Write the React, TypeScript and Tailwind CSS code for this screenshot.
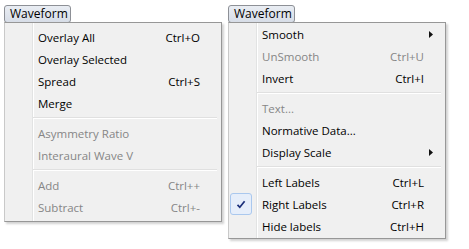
import { ReactNode } from "react";

type Item =
  | { kind: "sep" }
  | {
      kind?: "item";
      label: string;
      shortcut?: string;
      disabled?: boolean;
      submenu?: boolean;
      checked?: boolean;
    };

const leftItems: Item[] = [
  { label: "Overlay All", shortcut: "Ctrl+O" },
  { label: "Overlay Selected" },
  { label: "Spread", shortcut: "Ctrl+S" },
  { label: "Merge" },
  { kind: "sep" },
  { label: "Asymmetry Ratio", disabled: true },
  { label: "Interaural Wave V", disabled: true },
  { kind: "sep" },
  { label: "Add", shortcut: "Ctrl++", disabled: true },
  { label: "Subtract", shortcut: "Ctrl+-", disabled: true },
];

const rightItems: Item[] = [
  { label: "Smooth", submenu: true },
  { label: "UnSmooth", shortcut: "Ctrl+U", disabled: true },
  { label: "Invert", shortcut: "Ctrl+I" },
  { kind: "sep" },
  { label: "Text...", disabled: true },
  { label: "Normative Data..." },
  { label: "Display Scale", submenu: true },
  { kind: "sep" },
  { label: "Left Labels", shortcut: "Ctrl+L" },
  { label: "Right Labels", shortcut: "Ctrl+R", checked: true },
  { label: "Hide labels", shortcut: "Ctrl+H" },
];

const CheckBox = () => (
  <div className="ml-px -mt-[2px] flex h-[22px] w-[22px] items-center justify-center rounded-[3px] border border-[#aac8ee] bg-[#e6eefa]">
    <svg width="10" height="9" viewBox="0 0 10 9">
      <path d="M1.5 4.8 L3.8 7.3 L8.6 1.2" fill="none" stroke="#1b2f7a" strokeWidth="1.7" />
    </svg>
  </div>
);

const Arrow = () => (
  <svg width="4" height="7" viewBox="0 0 4 7" className="ml-[5px] -mt-[2px]">
    <path d="M0 0 L4 3.5 L0 7 Z" fill="#111" />
  </svg>
);

function MenuRow({ item }: { item: Item }) {
  if (item.kind === "sep") {
    return (
      <div className="flex h-[8px] flex-col justify-center pl-[28px] pr-[4px]">
        <div className="h-px bg-[#e0e0e0]" />
        <div className="h-px bg-white" />
      </div>
    );
  }
  const color = item.disabled ? "text-[#868686]" : "text-black";
  return (
    <div className={`flex h-[22px] items-center pt-[2px] ${color}`}>
      <div className="flex w-[33px] items-center">{item.checked && <CheckBox />}</div>
      <div className="flex-1 whitespace-nowrap">{item.label}</div>
      {item.shortcut && <div className="whitespace-nowrap">{item.shortcut}</div>}
      <div className="flex w-[21px] items-center">{item.submenu && <Arrow />}</div>
    </div>
  );
}

function Menu({ items, className }: { items: Item[]; className: string }): ReactNode {
  return (
    <div className="flex flex-col">
      <div className="flex h-[18px] w-[67px] items-center rounded-[3px] border border-[#8d9096] bg-[linear-gradient(#e9edf3,#d7dde7)] pl-[5px] text-[12px] leading-none text-black">
        Waveform
      </div>
      <div
        className={`-mt-px w-[218px] border border-[#979797] border-l-[#c9c9c9] bg-[linear-gradient(to_right,#f0f0f0_27px,#e2e3e3_27px,#e2e3e3_28px,#ffffff_28px,#ffffff_29px,#f0f0f0_29px)] shadow-[2px_2px_2px_rgba(0,0,0,0.18)] ${className}`}
      >
        {items.map((item, i) => (
          <MenuRow key={i} item={item} />
        ))}
      </div>
    </div>
  );
}

export default function App() {
  return (
    <div className="flex h-[249px] w-[469px] gap-[6px] bg-white pl-[4px] pt-[5px] text-[11.5px] font-['Open_Sans',sans-serif]">
      <Menu items={leftItems} className="pt-[3px] pb-[3px]" />
      <Menu items={rightItems} className="pb-px" />
    </div>
  );
}
